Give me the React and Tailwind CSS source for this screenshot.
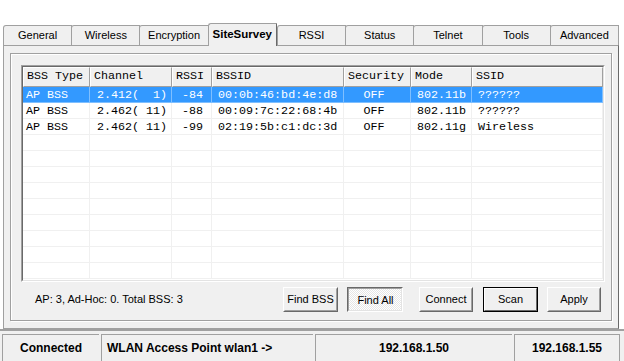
const tabs = ['General', 'Wireless', 'Encryption', 'SiteSurvey', 'RSSI', 'Status', 'Telnet', 'Tools', 'Advanced']

const columns = [
  { title: 'BSS Type', w: 'w-[67px]', align: 'text-left pl-[3px]' },
  { title: 'Channel', w: 'w-[82px]', align: 'text-left pl-[7px]' },
  { title: 'RSSI', w: 'w-[40px]', align: 'text-right pr-[8px]' },
  { title: 'BSSID', w: 'w-[132px]', align: 'text-left pl-[6px]' },
  { title: 'Security', w: 'w-[67px]', align: 'text-center pr-[6px]' },
  { title: 'Mode', w: 'w-[61px]', align: 'text-left pl-[6px]' },
  { title: 'SSID', w: 'flex-1', align: 'text-left pl-[6px]' },
]

const rows = [
  ['AP BSS', '2.412(  1)', '-84', '00:0b:46:bd:4e:d8', 'OFF', '802.11b', '??????'],
  ['AP BSS', '2.462( 11)', '-88', '00:09:7c:22:68:4b', 'OFF', '802.11b', '??????'],
  ['AP BSS', '2.462( 11)', '-99', '02:19:5b:c1:dc:3d', 'OFF', '802.11g', 'Wireless'],
]

const emptyRows = 9

function Button({ children, variant, w = 'w-[55px]' }) {
  if (variant === 'pressed') {
    return (
      <div className={`${w} h-[25px] border border-t-[#696969] border-l-[#696969] border-r-white border-b-white`}>
        <div className="w-full h-full flex items-center justify-center pt-[2px] pl-[1px] border border-t-[#a0a0a0] border-l-[#a0a0a0] border-r-[#e3e3e3] border-b-[#e3e3e3] bg-[repeating-conic-gradient(#ffffff_0_25%,#e6e6e6_0_50%)] bg-size-[2px_2px]">
          {children}
        </div>
      </div>
    )
  }
  if (variant === 'default') {
    return (
      <div className={`${w} h-[25px] border border-black`}>
        <div className="w-full h-full flex items-center justify-center border border-t-white border-l-white border-r-[#696969] border-b-[#696969] bg-[#f0f0f0]">
          {children}
        </div>
      </div>
    )
  }
  return (
    <div className={`${w} h-[25px] border border-t-white border-l-white border-r-[#696969] border-b-[#696969] bg-[#f0f0f0]`}>
      <div className="w-full h-full flex items-center justify-center border border-t-[#f0f0f0] border-l-[#f0f0f0] border-r-[#a0a0a0] border-b-[#a0a0a0]">
        {children}
      </div>
    </div>
  )
}

export default function App() {
  return (
    <div className="w-[624px] h-[361px] bg-white flex flex-col font-['Liberation_Sans',Arial,sans-serif] text-[11px] text-black overflow-hidden">
      <div className="h-[23px]" />

      {/* tabs */}
      <div className="flex items-end pl-[3px] pr-[6px] h-[22px] relative z-10">
        {tabs.map((t) =>
          t === 'SiteSurvey' ? (
            <div
              key={t}
              className="flex-1 h-[23px] -mb-[1px] bg-[#f0f0f0] border-l border-t border-r border-l-[#a0a0a0] border-t-[#a0a0a0] border-r-[#696969] rounded-tl-[3px] flex items-center justify-center font-bold text-[11.5px] pb-[1px]"
            >
              {t}
            </div>
          ) : (
            <div
              key={t}
              className="flex-1 h-[20px] bg-[#f0f0f0] border-l border-t border-r border-[#a0a0a0] rounded-tl-[3px] -mr-px flex items-center justify-center"
            >
              {t}
            </div>
          )
        )}
      </div>

      {/* main panel */}
      <div className="ml-[3px] mr-[5px] h-[284px] border border-[#a0a0a0] border-r-[#696969] bg-[#f0f0f0] px-[6px] pt-[7px] pb-[7px]">
        <div className="h-full border border-[#a0a0a0] shadow-[inset_1px_1px_0_#fff,1px_1px_0_#fff] pl-[10px] pr-[6px] pt-[11px] flex flex-col">
          {/* list */}
          <div className="h-[217px] border border-t-[#a0a0a0] border-l-[#a0a0a0] border-r-white border-b-white">
            <div className="h-full border border-t-[#696969] border-l-[#696969] border-r-[#e3e3e3] border-b-[#e3e3e3] bg-white flex flex-col overflow-hidden font-['Liberation_Mono','Courier_New',monospace] text-[11.7px]">
              <div className="flex h-[20px] shrink-0">
                {columns.map((c) => (
                  <div
                    key={c.title}
                    className={`${c.w} h-full bg-[#f0f0f0] border-t border-l border-t-white border-l-white border-r border-b border-r-[#a0a0a0] border-b-[#a0a0a0] flex items-center pl-[3px] leading-none`}
                  >
                    {c.title}
                  </div>
                ))}
              </div>
              {rows.map((r, i) => (
                <div
                  key={i}
                  className={`flex h-[16px] shrink-0 ${i === 0 ? 'bg-[#3399ff] text-white' : ''}`}
                >
                  {r.map((cell, j) => (
                    <div
                      key={j}
                      className={`${columns[j].w} ${columns[j].align} h-full border-r border-b ${i === 0 ? 'border-[#7fbfff]' : 'border-[#f0f0f0]'} whitespace-pre leading-[16px]`}
                    >
                      {cell}
                    </div>
                  ))}
                </div>
              ))}
              {Array.from({ length: emptyRows }).map((_, i) => (
                <div key={`e${i}`} className="flex h-[16px] shrink-0">
                  {columns.map((c) => (
                    <div key={c.title} className={`${c.w} h-full border-r border-b border-[#f0f0f0]`} />
                  ))}
                </div>
              ))}
            </div>
          </div>

          {/* bottom controls */}
          <div className="flex items-center mt-[5px]">
            <div className="pl-[14px] w-[262px] text-[11px]">AP: 3, Ad-Hoc: 0. Total BSS: 3</div>
            <Button>Find BSS</Button>
            <div className="w-[9px]" />
            <Button variant="pressed" w="w-[56px]">Find All</Button>
            <div className="w-[16px]" />
            <Button w="w-[54px]">Connect</Button>
            <div className="w-[10px]" />
            <Button variant="default">Scan</Button>
            <div className="w-[9px]" />
            <Button w="w-[54px]">Apply</Button>
          </div>
        </div>
      </div>

      <div className="h-[5px] bg-[#f0f0f0] border-t-2 border-[#a0a0a0]" />

      {/* status bar */}
      <div className="flex-1 bg-[#f0f0f0] flex pl-[2px] pr-[4px] font-bold text-[12px]">
        <div className="w-[97px] border-t border-l border-[#a0a0a0] flex items-center justify-center pb-[1px]">Connected</div>
        <div className="w-[212px] ml-[2px] border-t border-l border-[#a0a0a0] flex items-center pl-[5px] pb-[1px]">WLAN Access Point wlan1 -&gt;</div>
        <div className="w-[197px] ml-[2px] border-t border-l border-[#a0a0a0] flex items-center justify-center pb-[1px]">192.168.1.50</div>
        <div className="flex-1 ml-[2px] border-t border-l border-r border-[#a0a0a0] flex items-center justify-center pb-[1px]">192.168.1.55</div>
      </div>
    </div>
  )
}
